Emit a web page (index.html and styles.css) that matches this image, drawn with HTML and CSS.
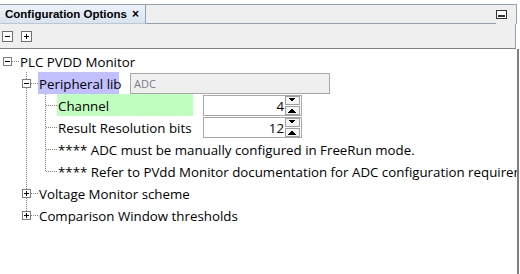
FILE: index.html
```html
<!DOCTYPE html>
<html>
  <head>
    <title>Configuration Options</title>
    <meta http-equiv="Content-Type" content="text/html; charset=UTF-8"/>
    <link rel="stylesheet" href="styles.css">
  </head>
  <body>
    <div class="panel">
      <div class="tabbar">
        <div class="tab">
          <span class="tab-title">Configuration Options</span>
          <span class="tab-close">&times;</span>
        </div>
        <div class="tabbar-fill"></div>
        <svg class="minimize" width="11" height="9" viewBox="0 0 11 9">
          <rect x="0.5" y="0.5" width="10" height="8" fill="#fff" stroke="#333"/>
          <rect x="2" y="5" width="7" height="2" fill="#333"/>
        </svg>
      </div>

      <div class="toolbar">
        <svg class="tool" width="11" height="11" viewBox="0 0 11 11">
          <rect x="0.5" y="0.5" width="10" height="10" fill="#fff" stroke="#6f6f6f"/>
          <rect x="3" y="5" width="5" height="1" fill="#000"/>
        </svg>
        <svg class="tool" width="11" height="11" viewBox="0 0 11 11">
          <rect x="0.5" y="0.5" width="10" height="10" fill="#fff" stroke="#6f6f6f"/>
          <rect x="3" y="5" width="5" height="1" fill="#000"/>
          <rect x="5" y="3" width="1" height="5" fill="#000"/>
        </svg>
      </div>

      <div class="tree">
        <!-- root -->
        <div class="row">
          <div class="leg root-leg">
            <span class="box minus"></span>
          </div>
          <span class="label">PLC PVDD Monitor</span>
        </div>

        <div class="row">
          <div class="leg"></div>
          <div class="leg tee">
            <span class="box minus"></span>
          </div>
          <span class="label lib">Peripheral lib</span>
          <div class="combo">ADC</div>
        </div>

        <div class="row">
          <div class="leg"></div>
          <div class="leg pipe"></div>
          <div class="leg tee"></div>
          <span class="label setting channel">Channel</span>
          <div class="spinner">
            <span class="spin-value">4</span>
            <div class="spin-buttons">
              <span class="spin-btn up"></span>
              <span class="spin-btn down"></span>
            </div>
          </div>
        </div>

        <div class="row">
          <div class="leg"></div>
          <div class="leg pipe"></div>
          <div class="leg tee"></div>
          <span class="label setting">Result Resolution bits</span>
          <div class="spinner">
            <span class="spin-value">12</span>
            <div class="spin-buttons">
              <span class="spin-btn up"></span>
              <span class="spin-btn down"></span>
            </div>
          </div>
        </div>

        <div class="row">
          <div class="leg"></div>
          <div class="leg pipe"></div>
          <div class="leg tee"></div>
          <span class="label note">**** ADC must be manually configured in FreeRun mode.</span>
        </div>

        <div class="row">
          <div class="leg"></div>
          <div class="leg pipe"></div>
          <div class="leg ell"></div>
          <span class="label note">**** Refer to PVdd Monitor documentation for ADC configuration requirements.</span>
        </div>

        <div class="row">
          <div class="leg"></div>
          <div class="leg tee">
            <span class="box plus"></span>
          </div>
          <span class="label">Voltage Monitor scheme</span>
        </div>

        <div class="row">
          <div class="leg"></div>
          <div class="leg ell">
            <span class="box plus"></span>
          </div>
          <span class="label">Comparison Window thresholds</span>
        </div>
      </div>
    </div>
  </body>
</html>
```

FILE: styles.css
```css
body {
  margin: 0;
  background: #fff;
  font-family: 'Open Sans', 'DejaVu Sans', sans-serif;
  font-size: 13.3px;
  color: #000;
}

.panel {
  width: 520px;
  height: 274px;
  padding-top: 4px;
  box-sizing: border-box;
  display: flex;
  flex-direction: column;
  overflow: hidden;
}

/* header with the tab */
.tabbar {
  display: flex;
  align-items: stretch;
  height: 19px;
  width: 516px;
  background: #efefef;
  border-top: 1px solid #8fa3b8;
  border-right: 1px solid #8fa3b8;
}

.tab {
  flex: none;
  display: flex;
  align-items: center;
  justify-content: space-between;
  width: 146px;
  box-sizing: border-box;
  padding: 0 6px 0 5px;
  white-space: nowrap;
  background: linear-gradient(#edf2f8, #d9e3ee);
  border-right: 1px solid #8fa3b8;
  border-bottom: 1px solid #b9c8d8;
}

.tab-title {
  font-family: 'Liberation Sans', Arial, sans-serif;
  font-weight: bold;
  font-size: 11.5px;
  color: #000;
}

.tab-close {
  font-family: 'Liberation Sans', Arial, sans-serif;
  font-weight: bold;
  font-size: 12px;
}

.tabbar-fill {
  flex: 1;
  border-bottom: 1px solid #8fa3b8;
}

.minimize {
  align-self: center;
  margin: 0 9px 1px 0;
}

/* toolbar */
.toolbar {
  display: flex;
  align-items: center;
  gap: 8px;
  height: 25px;
  width: 516px;
  padding-left: 2px;
  box-sizing: border-box;
  background: #efefef;
  border-right: 1px solid #8fa3b8;
  border-bottom: 1px solid #808080;
}

/* tree */
.tree {
  flex: 1;
  width: 517px;
  padding-top: 1px;
  background: #fff;
  border-right: 2px solid #808080;
  overflow: hidden;
}

.row {
  display: flex;
  align-items: center;
  height: 22px;
  white-space: nowrap;
}

.leg {
  flex: none;
  display: flex;
  align-items: center;
  width: 19px;
  height: 22px;
  box-sizing: border-box;
  padding-left: 3px;
}

.pipe {
  background: repeating-linear-gradient(#808080 0 1px, transparent 1px 2px) 7px 0 / 1px 100% no-repeat;
}

.tee {
  background:
    repeating-linear-gradient(#808080 0 1px, transparent 1px 2px) 7px 0 / 1px 100% no-repeat,
    repeating-linear-gradient(90deg, #808080 0 1px, transparent 1px 2px) 8px 11px / 11px 1px no-repeat;
}

.ell {
  background:
    repeating-linear-gradient(#808080 0 1px, transparent 1px 2px) 7px 0 / 1px 12px no-repeat,
    repeating-linear-gradient(90deg, #808080 0 1px, transparent 1px 2px) 8px 11px / 11px 1px no-repeat;
}

.root-leg {
  background: repeating-linear-gradient(90deg, #808080 0 1px, transparent 1px 2px) 12px 11px / 7px 1px no-repeat;
}

.box {
  display: block;
  width: 9px;
  height: 9px;
  box-sizing: border-box;
  border: 1px solid #7b7b7b;
  background-color: #fff;
}

.box.minus {
  background-image: linear-gradient(#000, #000);
  background-size: 5px 1px;
  background-position: center;
  background-repeat: no-repeat;
}

.box.plus {
  background-image: linear-gradient(#000, #000), linear-gradient(#000, #000);
  background-size: 5px 1px, 1px 5px;
  background-position: center;
  background-repeat: no-repeat;
}

.label {
  display: flex;
  align-items: center;
  height: 22px;
  box-sizing: border-box;
  padding: 1px 1px 0;
}

.label.lib {
  width: 81px;
  background: #c0c0ff;
}

.label.setting {
  width: 136px;
}

.label.channel {
  background: #c0ffc0;
}

.combo {
  margin-left: 11px;
  width: 200px;
  height: 21px;
  box-sizing: border-box;
  display: flex;
  align-items: center;
  padding-left: 3px;
  background: #efefef;
  border: 1px solid #a8a8a8;
  font-size: 11px;
  color: #7a7a8c;
}

.spinner {
  margin-left: 10px;
  width: 99px;
  height: 21px;
  box-sizing: border-box;
  display: flex;
  align-items: center;
  gap: 1px;
  padding-right: 1px;
  background: #fff;
  border: 1px solid #a8a8a8;
}

.spin-value {
  flex: 1;
  padding-top: 1px;
  text-align: right;
}

.spin-buttons {
  display: flex;
  flex-direction: column;
  gap: 1px;
}

.spin-btn {
  display: block;
  width: 15px;
  height: 9px;
  box-sizing: border-box;
  border: 1px solid #a0a0a0;
  background: #f4f4f4;
}

.spin-btn.up {
  background-image: linear-gradient(45deg, transparent 50%, #000 50%), linear-gradient(-45deg, transparent 50%, #000 50%);
  background-size: 4px 4px, 4px 4px;
  background-position: 2px 1px, 6px 1px;
  background-repeat: no-repeat;
}

.spin-btn.down {
  background-image: linear-gradient(135deg, transparent 50%, #000 50%), linear-gradient(-135deg, transparent 50%, #000 50%);
  background-size: 4px 4px, 4px 4px;
  background-position: 2px 2px, 6px 2px;
  background-repeat: no-repeat;
}
```
